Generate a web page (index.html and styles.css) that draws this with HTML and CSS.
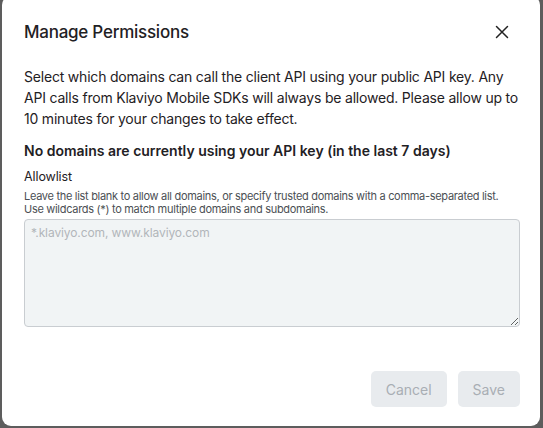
FILE: index.html
```html
<!DOCTYPE html>
<html>
<head>
<meta charset="utf-8">
<link rel="stylesheet" href="styles.css">
</head>
<body>
<div class="modal">
  <div class="header">
    <h2 class="title">Manage Permissions</h2>
    <button class="close" aria-label="Close">
      <svg width="14" height="14" viewBox="0 0 14 14"><path d="M1.5 1.5L12.5 12.5M12.5 1.5L1.5 12.5" stroke="#222" stroke-width="1.5" stroke-linecap="round"/></svg>
    </button>
  </div>
  <div class="body">
    <p class="intro">Select which domains can call the client API using your public API key. Any API calls from Klaviyo Mobile SDKs will always be allowed. Please allow up to 10 minutes for your changes to take effect.</p>
    <p class="notice">No domains are currently using your API key (in the last 7 days)</p>
    <label class="label">Allowlist</label>
    <p class="help">Leave the list blank to allow all domains, or specify trusted domains with a comma-separated list. Use wildcards (*) to match multiple domains and subdomains.</p>
    <textarea class="field" placeholder="*.klaviyo.com, www.klaviyo.com"></textarea>
  </div>
  <div class="footer">
    <button class="btn">Cancel</button>
    <button class="btn">Save</button>
  </div>
</div>
</body>
</html>
```
FILE: styles.css
```css
html, body {
  margin: 0;
  padding: 0;
  height: 100%;
}
body {
  background: #5d5d5d;
  font-family: Inter, "Noto Sans", sans-serif;
  color: #1f2124;
  overflow: hidden;
}
.modal {
  background: #fff;
  margin-left: 2px;
  width: 538px;
  height: 430px;
  margin-top: -4px;
  border-radius: 9px;
  box-sizing: border-box;
  padding: 8px 20px 0 22px;
  display: flex;
  flex-direction: column;
}
.header {
  display: flex;
  align-items: center;
  justify-content: space-between;
  height: 56px;
}
.title {
  margin: 0;
  font-size: 17px;
  font-weight: 500;
  letter-spacing: -0.25px;
}
.close {
  border: 0;
  background: none;
  padding: 0;
  margin-right: 11px;
  width: 14px;
  height: 14px;
  display: flex;
}
.body {
  display: flex;
  flex-direction: column;
}
.intro {
  margin: 6px 0 0;
  font-size: 14px;
  line-height: 21px;
  letter-spacing: -0.2px;
}
.notice {
  margin: 11px 0 0;
  font-size: 14px;
  line-height: 21px;
  font-weight: 600;
}
.label {
  margin-top: 7px;
  font-size: 12.5px;
  line-height: 18px;
  letter-spacing: -0.1px;
}
.help {
  margin: 4px 0 0;
  font-size: 11px;
  line-height: 13px;
  letter-spacing: -0.3px;
  color: #4b4f54;
}
.field {
  margin-top: 3px;
  height: 108px;
  box-sizing: border-box;
  background: #f1f4f5;
  border: 1px solid #c9cdd1;
  border-radius: 4px;
  padding: 5px 6px;
  font-family: inherit;
  font-size: 12px;
  letter-spacing: -0.1px;
  resize: vertical;
}
.field::placeholder {
  color: #b2b6ba;
}
.footer {
  display: flex;
  justify-content: flex-end;
  gap: 11px;
  margin-top: 44px;
}
.btn {
  height: 36px;
  border: 0;
  border-radius: 5px;
  background: #e8ebee;
  color: #a9aeb4;
  font-family: inherit;
  font-size: 14px;
  padding: 0 15px;
}
```
